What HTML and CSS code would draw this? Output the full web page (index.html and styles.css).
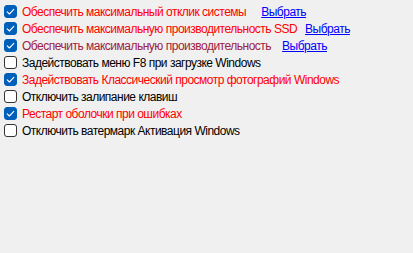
FILE: index.html
```html
<!DOCTYPE html>
<html lang="ru">
<head>
<meta charset="utf-8">
<link rel="stylesheet" href="styles.css">
</head>
<body>
<div class="list">
  <div class="row"><span class="box on"><svg viewBox="0 0 13 13"><path d="M3.2 6.8 L5.4 9 L9.8 4.3"/></svg></span><span class="label red">Обеспечить максимальный отклик системы</span><a class="link wide" href="#">Выбрать</a></div>
  <div class="row"><span class="box on"><svg viewBox="0 0 13 13"><path d="M3.2 6.8 L5.4 9 L9.8 4.3"/></svg></span><span class="label red">Обеспечить максимальную производительность SSD</span><a class="link tight" href="#">Выбрать</a></div>
  <div class="row"><span class="box on"><svg viewBox="0 0 13 13"><path d="M3.2 6.8 L5.4 9 L9.8 4.3"/></svg></span><span class="label dark">Обеспечить максимальную производительность</span><a class="link" href="#">Выбрать</a></div>
  <div class="row"><span class="box"></span><span class="label">Задействовать меню F8 при загрузке Windows</span></div>
  <div class="row"><span class="box on"><svg viewBox="0 0 13 13"><path d="M3.2 6.8 L5.4 9 L9.8 4.3"/></svg></span><span class="label red">Задействовать Классический просмотр фотографий Windows</span></div>
  <div class="row"><span class="box"></span><span class="label">Отключить залипание клавиш</span></div>
  <div class="row"><span class="box on"><svg viewBox="0 0 13 13"><path d="M3.2 6.8 L5.4 9 L9.8 4.3"/></svg></span><span class="label red">Рестарт оболочки при ошибках</span></div>
  <div class="row"><span class="box"></span><span class="label">Отключить ватермарк Активация Windows</span></div>
</div>
</body>
</html>
```

FILE: styles.css
```css
html, body {
  margin: 0;
  padding: 0;
  background: #f0f0f0;
}
body {
  font-family: "Liberation Sans", Arial, sans-serif;
  font-size: 12px;
  letter-spacing: -0.5px;
  color: #000;
  width: 413px;
  height: 253px;
  overflow: hidden;
}
.list {
  display: flex;
  flex-direction: column;
  padding: 3px 0 0 4px;
}
.row {
  display: flex;
  align-items: center;
  height: 17px;
  white-space: nowrap;
}
.box {
  box-sizing: border-box;
  width: 13px;
  height: 13px;
  border: 1px solid #333;
  border-radius: 3px;
  background: #fff;
  display: flex;
  align-items: center;
  justify-content: center;
  flex: none;
}
.box.on {
  background: #005fb8;
  border-color: #005fb8;
}
.box svg {
  width: 13px;
  height: 13px;
  flex: none;
}
.box svg path {
  fill: none;
  stroke: #fff;
  stroke-width: 1.1;
  stroke-linecap: round;
  stroke-linejoin: round;
}
.label {
  margin-left: 5px;
}
.red { color: #ff0000; }
.dark { color: #9e2040; }
.link {
  color: #0000ff;
  text-decoration: underline;
  margin-left: 11px;
}
.link.wide {
  margin-left: 15px;
}
.link.tight {
  margin-left: 8px;
}
```
